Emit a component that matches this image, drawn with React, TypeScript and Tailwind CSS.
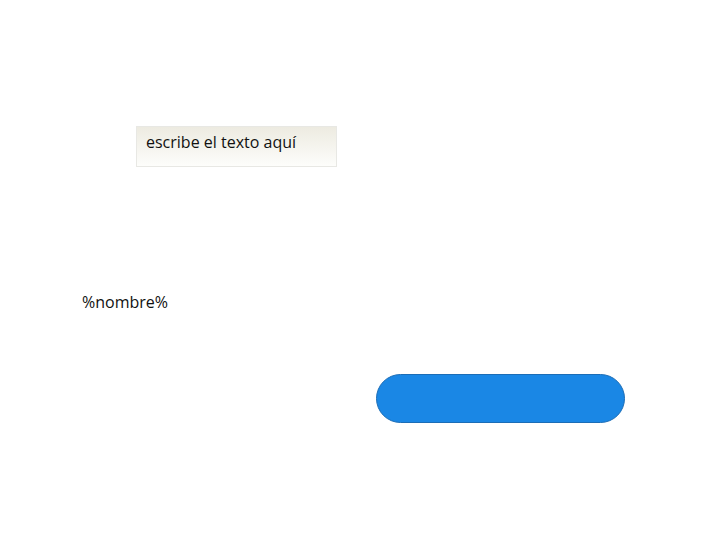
export default function App() {
  return (
    <div className="w-[720px] h-[540px] bg-white flex flex-col" style={{ fontFamily: '"Open Sans", sans-serif' }}>
      <div className="mt-[126px] ml-[136px] w-[201px] h-[41px] border border-[#e8e8e4] bg-gradient-to-b from-[#edebe1] to-[#fdfdfb] flex items-center pl-[9px] pb-[10px]">
        <span className="text-[16px] text-[#111] leading-[22px]">escribe el texto aquí</span>
      </div>
      <div className="mt-[124px] ml-[82px] text-[16px] leading-[22px] text-[#111]">%nombre%</div>
      <div className="mt-[61px] ml-[376px] w-[249px] h-[49px] rounded-full bg-[#1a87e5] border border-[#1c6db6]"></div>
    </div>
  );
}
